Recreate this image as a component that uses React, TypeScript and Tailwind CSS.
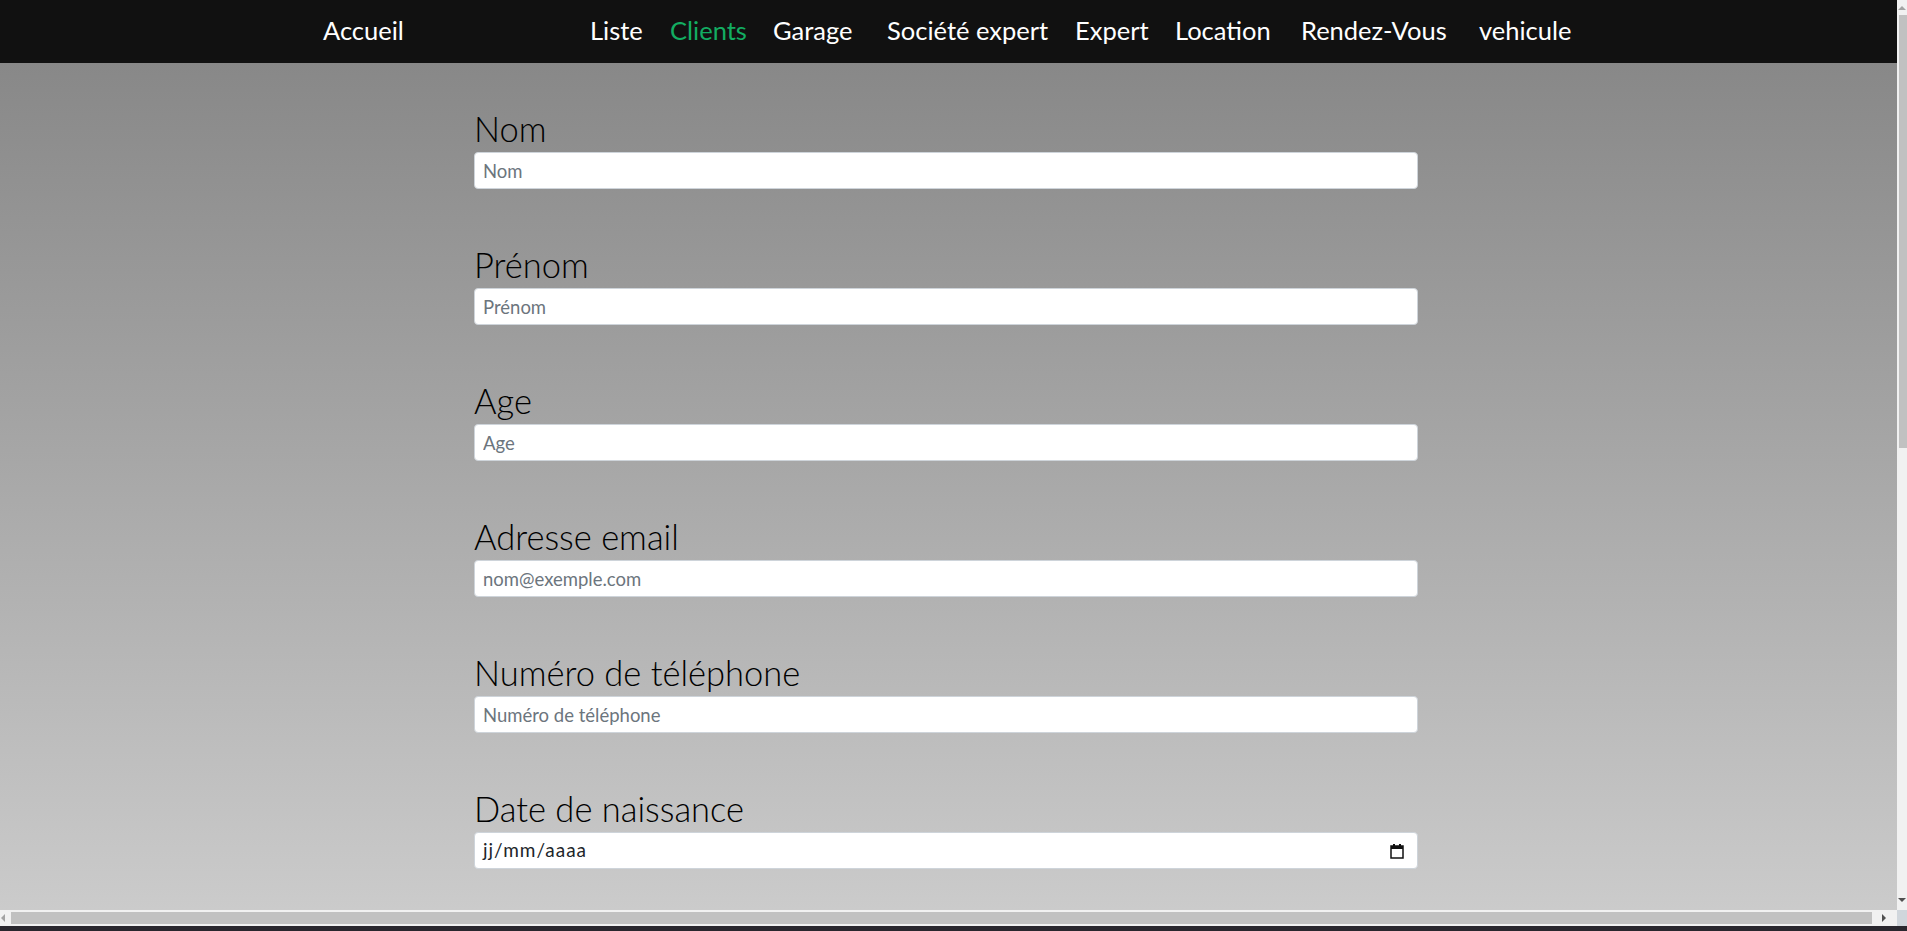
import React from "react";

const links: { label: string; w: string; active?: boolean }[] = [
  { label: "Liste", w: "w-[80px]" },
  { label: "Clients", w: "w-[103px]", active: true },
  { label: "Garage", w: "w-[114px]" },
  { label: "Société expert", w: "w-[188px]" },
  { label: "Expert", w: "w-[100px]" },
  { label: "Location", w: "w-[126px]" },
  { label: "Rendez-Vous", w: "w-[178px]" },
  { label: "vehicule", w: "w-[120px]" },
];

const fields: { label: string; placeholder: string }[] = [
  { label: "Nom", placeholder: "Nom" },
  { label: "Prénom", placeholder: "Prénom" },
  { label: "Age", placeholder: "Age" },
  { label: "Adresse email", placeholder: "nom@exemple.com" },
  { label: "Numéro de téléphone", placeholder: "Numéro de téléphone" },
];

const font = "font-['Lato','Noto_Sans',sans-serif]";

export default function App() {
  return (
    <div className={`w-[1907px] h-[931px] overflow-hidden flex flex-col ${font}`}>
      <div className="flex h-[910px]">
        <div className="w-[1897px] flex flex-col">
          <nav className="h-[63px] shrink-0 bg-[#111111] flex items-center pb-[3px] text-white text-[25.5px]">
            <div className="pl-[323px] w-[590px] shrink-0">
              <span>Accueil</span>
            </div>
            <div className="flex">
              {links.map((l) => (
                <div key={l.label} className={`${l.w} shrink-0 whitespace-nowrap`}>
                  <span className={l.active ? "text-[#13ad62]" : "text-white"}>{l.label}</span>
                </div>
              ))}
            </div>
          </nav>
          <main className="flex-1 bg-gradient-to-b from-[#888888] to-[#cbcbcb]">
            <div className="w-[944px] ml-[474px] pt-[51px] flex flex-col gap-[61px]">
              {fields.map((f) => (
                <div key={f.label} className="flex flex-col">
                  <label className="text-[34.5px] leading-[29px] pb-[9px] text-black font-light">{f.label}</label>
                  <input
                    type="text"
                    placeholder={f.placeholder}
                    className="h-[37px] w-full bg-white border border-[#ced4da] rounded-[4px] px-[8px] text-[18.5px] text-[#212529] placeholder:text-[#6c757d] outline-none"
                  />
                </div>
              ))}
              <div className="flex flex-col">
                <label className="text-[34.5px] leading-[29px] pb-[9px] text-black font-light">Date de naissance</label>
                <div className="h-[37px] w-full bg-white border border-[#ced4da] rounded-[4px] pl-[8px] pr-[13px] flex items-center justify-between text-[19px] tracking-[1px] text-[#212529]">
                  <span>jj/mm/aaaa</span>
                  <svg width="14" height="16" viewBox="0 0 14 16" className="shrink-0">
                    <rect x="1" y="3" width="12" height="12" fill="none" stroke="#111" strokeWidth="1.5" />
                    <rect x="1" y="3" width="12" height="3" fill="#111" />
                    <rect x="3" y="1" width="2" height="3" fill="#111" />
                    <rect x="9" y="1" width="2" height="3" fill="#111" />
                  </svg>
                </div>
              </div>
            </div>
          </main>
        </div>
        <div className="w-[10px] bg-[#f1f1f1] flex flex-col">
          <div className="h-[15px] flex items-center justify-end pr-[1px]">
            <svg width="8" height="5" viewBox="0 0 8 5">
              <polygon points="0,5 4,1 8,5" fill="#a3a3a3" />
            </svg>
          </div>
          <div className="h-[433px] ml-[2px] bg-[#c1c1c1]" />
          <div className="flex-1" />
          <div className="h-[15px] flex items-start justify-end pt-[3px] pr-[1px]">
            <svg width="8" height="5" viewBox="0 0 8 5">
              <polygon points="0,0 8,0 4,4" fill="#505050" />
            </svg>
          </div>
        </div>
      </div>
      <div className="h-[16px] flex">
        <div className="w-[1897px] bg-[#f1f1f1] flex">
          <div className="w-[11px] flex items-center">
            <svg width="5" height="8" viewBox="0 0 5 8">
              <polygon points="5,0 5,8 1,4" fill="#a3a3a3" />
            </svg>
          </div>
          <div className="w-[1861px] h-[12px] mt-[2px] bg-[#c1c1c1]" />
          <div className="flex-1 flex items-center justify-center">
            <svg width="5" height="8" viewBox="0 0 5 8">
              <polygon points="0,0 4,4 0,8" fill="#505050" />
            </svg>
          </div>
        </div>
        <div className="w-[10px] bg-[#d0d6dc]" />
      </div>
      <div className="h-[5px] bg-[#29272e]" />
    </div>
  );
}
